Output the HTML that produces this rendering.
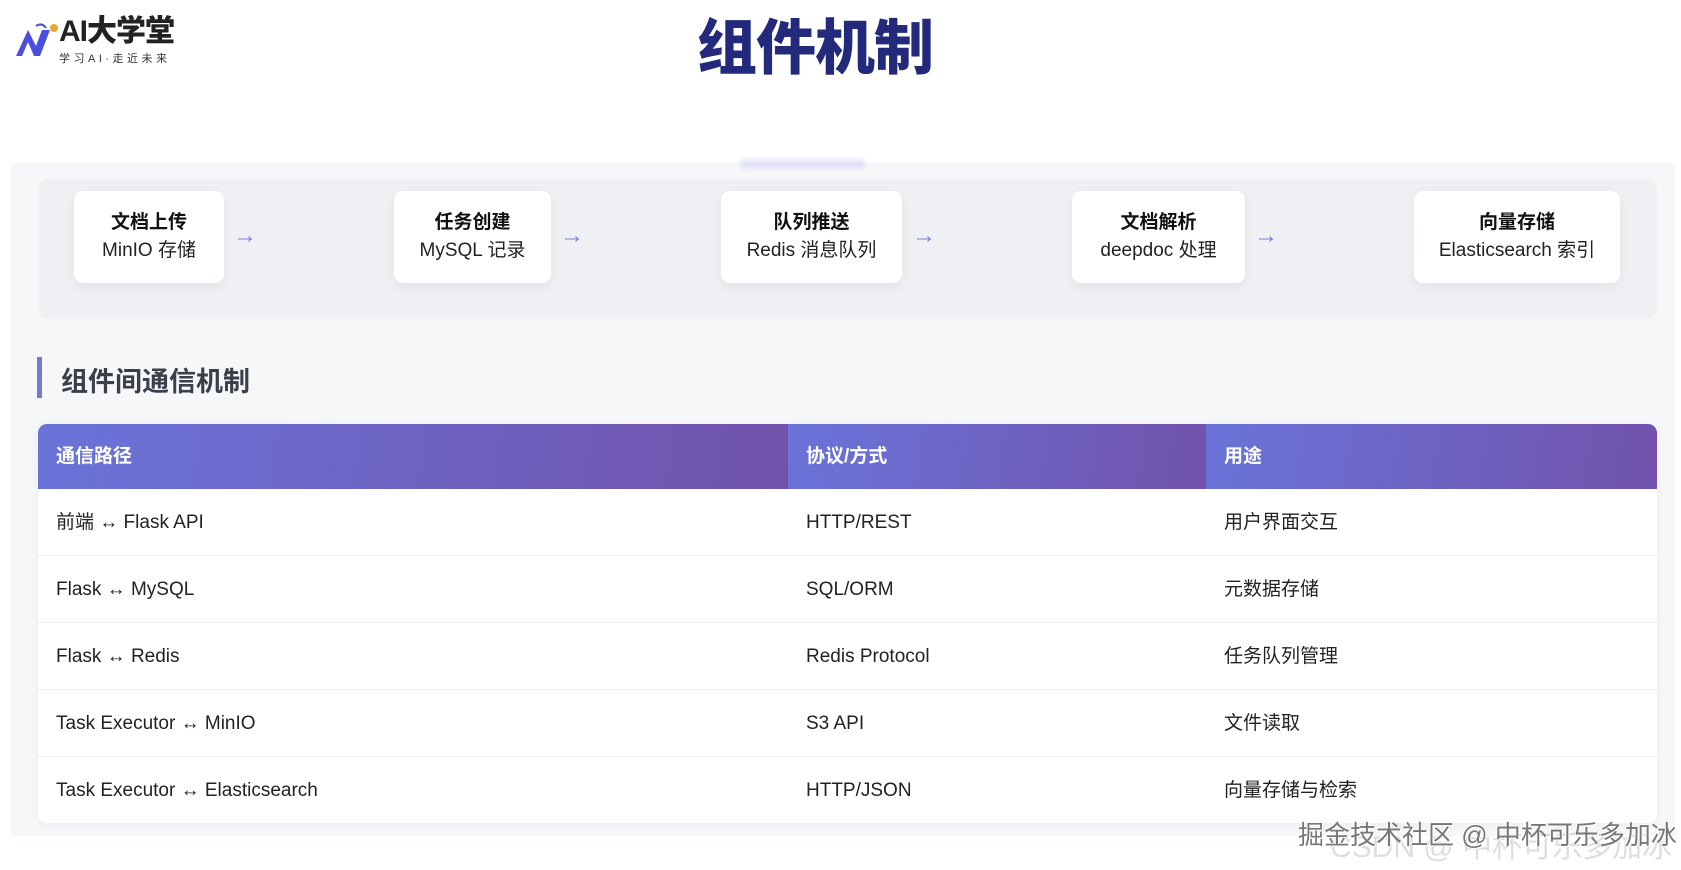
<!DOCTYPE html>
<html><head><meta charset="utf-8"><style>
*{margin:0;padding:0;box-sizing:border-box}
body{width:1681px;height:870px;background:#fff;position:relative;overflow:hidden;font-family:"Liberation Sans","Noto Sans CJK SC",sans-serif;color:#222}
.abs{position:absolute}
.title{left:0;width:1630px;text-align:center;top:0px;font-size:60px;font-weight:900;color:#232a7c;letter-spacing:-1px}
.panel{left:11px;top:163px;width:1664px;height:673px;background:#f6f7f9}
.flow{left:38px;top:179px;width:1619px;height:140px;background:#eff0f3;border-radius:10px}
.glow{left:740px;top:160px;width:125px;height:8px;background:#dcdcf7;border-radius:6px;filter:blur(3px)}
.box{top:191px;height:92px;background:#fff;border-radius:9px;box-shadow:0 4px 12px rgba(0,0,0,.06);text-align:center;padding-top:18px;font-size:19px;line-height:28px}
.box b{display:block;font-weight:700;color:#111}
.arr{top:224px;color:#7b7fdc;font-size:24px;line-height:24px}
.hbar{left:37px;top:357px;width:5px;height:41px;background:#7479d8}
.h2{left:61px;top:360px;font-size:27px;font-weight:700;color:#3b3f4a}
.table{left:38px;top:424px;width:1619px;height:399px;background:#fff;border-radius:9px;overflow:hidden;box-shadow:0 2px 10px rgba(0,0,0,.05)}
.hd{position:absolute;top:0;height:65px;background:linear-gradient(100deg,#6a74d9,#7152ab);color:#fff;font-weight:700;font-size:19px;line-height:65px;padding-left:18px}
.row{position:absolute;left:0;width:1619px;height:67px;border-bottom:1px solid #eceef2;font-size:19px;line-height:67px}
.row span{position:absolute}
.wm{left:1298px;top:815px;font-size:26px;color:#777;text-shadow:1px 1px 0 #fff,-1px -1px 0 #fff}
.wm2{left:1330px;top:822px;font-size:30px;color:rgba(200,200,200,.6)}
</style></head><body>
<div class="abs" style="left:12px;top:18px;width:190px;height:40px">
<svg width="50" height="40" viewBox="0 0 46 40" style="position:absolute;left:0;top:2px"><path d="M2 36 L14 10 L22 26 L28 10 L36 10 L26 36 L20 36 L14 22 L8 36Z" fill="#4b4fe0"/><path d="M22 6 Q28 2 32 8" stroke="#4b4fe0" stroke-width="2" fill="none"/><circle cx="40" cy="8" r="4" fill="#e7a83a"/></svg>
<div class="abs" style="left:47px;top:-2px;font-size:30px;line-height:32px;font-weight:900;color:#222;letter-spacing:-1px;white-space:nowrap">AI大学堂</div>
<div class="abs" style="left:47px;top:32px;font-size:11px;color:#333;letter-spacing:3.5px;white-space:nowrap">学习AI·走近未来</div>
</div>
<div class="abs title">组件机制</div>
<div class="abs panel"></div>
<div class="abs glow"></div>
<div class="abs flow"></div>
<div class="abs box" style="left:74px;width:150px"><b>文档上传</b>MinIO 存储</div>
<div class="abs arr" style="left:233px">→</div>
<div class="abs box" style="left:394px;width:157px"><b>任务创建</b>MySQL 记录</div>
<div class="abs arr" style="left:560px">→</div>
<div class="abs box" style="left:721px;width:181px"><b>队列推送</b>Redis 消息队列</div>
<div class="abs arr" style="left:912px">→</div>
<div class="abs box" style="left:1072px;width:173px"><b>文档解析</b>deepdoc 处理</div>
<div class="abs arr" style="left:1254px">→</div>
<div class="abs box" style="left:1414px;width:206px"><b>向量存储</b>Elasticsearch 索引</div>
<div class="abs hbar"></div>
<div class="abs h2">组件间通信机制</div>
<div class="abs table">
<div class="hd" style="left:0;width:750px">通信路径</div>
<div class="hd" style="left:750px;width:418px">协议/方式</div>
<div class="hd" style="left:1168px;width:451px">用途</div>
<div class="row" style="top:65px"><span style="left:18px">前端 ↔ Flask API</span><span style="left:768px">HTTP/REST</span><span style="left:1186px">用户界面交互</span></div>
<div class="row" style="top:132px"><span style="left:18px">Flask ↔ MySQL</span><span style="left:768px">SQL/ORM</span><span style="left:1186px">元数据存储</span></div>
<div class="row" style="top:199px"><span style="left:18px">Flask ↔ Redis</span><span style="left:768px">Redis Protocol</span><span style="left:1186px">任务队列管理</span></div>
<div class="row" style="top:266px"><span style="left:18px">Task Executor ↔ MinIO</span><span style="left:768px">S3 API</span><span style="left:1186px">文件读取</span></div>
<div class="row" style="top:333px;border:none"><span style="left:18px">Task Executor ↔ Elasticsearch</span><span style="left:768px">HTTP/JSON</span><span style="left:1186px">向量存储与检索</span></div>
</div>
<div class="abs wm2">CSDN @ 中杯可乐多加冰</div>
<div class="abs wm">掘金技术社区 @ 中杯可乐多加冰</div>
</body></html>
